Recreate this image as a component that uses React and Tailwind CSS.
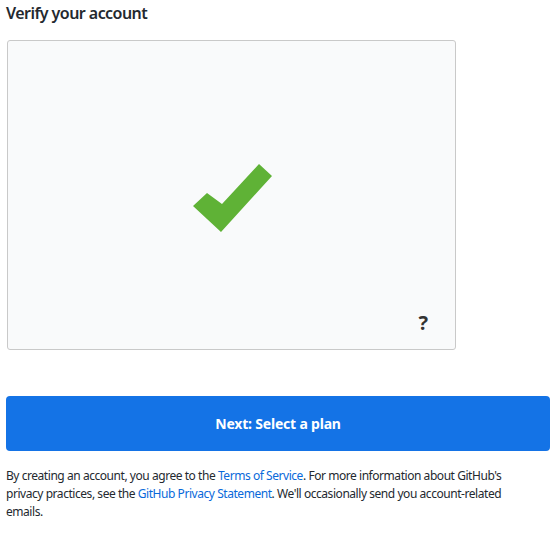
import React from 'react';

const Check = () => (
  <svg width="555" height="545" className="absolute left-0 top-0 pointer-events-none" viewBox="0 0 555 545">
    <polygon points="193,205 207,192 222,203 259,163 272,175 221,231" fill="#5fb236" />
  </svg>
);

export default function App() {
  return (
    <div className="w-[555px] h-[545px] bg-white text-[#24292f] font-['Noto_Sans',sans-serif] px-[6px]">
      <h2 className="pt-[2px] text-[16px] leading-[22px] font-semibold tracking-[-0.55px]">Verify your account</h2>

      <div className="relative mt-[16px] ml-[1px] w-[449px] h-[310px] bg-[#f9fafb] border border-[#c9c9c9] rounded-[3px]">
        <div className="absolute -left-[8px] -top-[40px]">
          <Check />
        </div>
        <span className="absolute right-[27px] bottom-[11px] text-[20px] font-bold text-[#333]">?</span>
      </div>

      <button className="mt-[46px] w-[544px] h-[55px] bg-[#1473e6] text-white rounded-[4px] text-[14px] font-bold tracking-[-0.2px]">
        Next: Select a plan
      </button>

      <p className="mt-[16px] w-[505px] text-[12px] leading-[18px] tracking-[-0.45px] text-[#24292f]">
        By creating an account, you agree to the <a className="text-[#0969da]">Terms of Service</a>. For more information about GitHub's privacy practices, see the <a className="text-[#0969da]">GitHub Privacy Statement</a>. We'll occasionally send you account-related emails.
      </p>
    </div>
  );
}
